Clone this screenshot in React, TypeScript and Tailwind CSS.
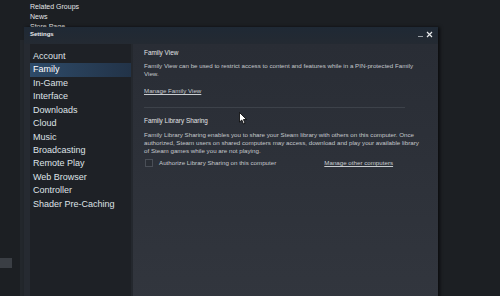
import React from "react";

const items = [
  "Account",
  "Family",
  "In-Game",
  "Interface",
  "Downloads",
  "Cloud",
  "Music",
  "Broadcasting",
  "Remote Play",
  "Web Browser",
  "Controller",
  "Shader Pre-Caching",
];

export default function App() {
  return (
    <div
      className="relative w-[500px] h-[296px] overflow-hidden bg-[#1c1f23] text-[#dfe3e6]"
      style={{ fontFamily: '"Liberation Sans", Arial, sans-serif' }}
    >
      {/* background page */}
      <div className="flex flex-col pl-[30px] pt-[2px] text-[7px] leading-[10px] text-[#e4e6e8]">
        <div>Related Groups</div>
        <div>News</div>
        <div>Store Page</div>
      </div>
      <div className="absolute left-0 top-[258px] w-[12px] h-[10px] bg-[#3a3e44]" />
      <div className="absolute left-[20px] top-[40px] w-[4px] h-[256px] bg-[#23272c]" />

      {/* settings window */}
      <div className="absolute left-[24px] top-[27px] w-[414px] h-[280px] flex flex-col bg-[#262a31] shadow-[2px_0_3px_rgba(0,0,0,0.6)]">
        <div className="h-[17px] flex items-center justify-between pl-[6px] pr-[5px] bg-gradient-to-b from-[#1f2935] to-[#242a32]">
          <span className="text-[6px] font-bold text-[#e8eaec] mt-[-3px]">Settings</span>
          <div className="flex items-center gap-[3px] mt-[-3px]">
            <div className="w-[5px] h-[1px] bg-[#9aa0a6] mt-[4px]" />
            <svg width="7" height="7" viewBox="0 0 7 7">
              <path d="M1 1L6 6M6 1L1 6" stroke="#e8eaec" strokeWidth="1.2" />
            </svg>
          </div>
        </div>
        <div className="flex flex-1 pl-[6px]">
          <div className="w-[101px] flex flex-col pt-[6px] bg-[#1e2126] text-[9px]">
            {items.map((it) => (
              <div
                key={it}
                className={
                  "h-[13.45px] flex items-center pl-[3px] " +
                  (it === "Family"
                    ? "bg-gradient-to-r from-[#2e4b69] to-[#223348] text-white"
                    : "text-[#dfe3e6]")
                }
              >
                {it}
              </div>
            ))}
          </div>
          <div className="w-[2px] bg-[#24282e]" />
          <div className="flex-1 flex flex-col pl-[11px] pr-[17px] pt-[20px] bg-gradient-to-b from-[#292d35] to-[#32363e] text-[6.2px] text-[#c4c8cc]">
            <div className="text-[6.4px] text-[#e2e4e6] leading-[8px] mt-[-15px]">Family View</div>
            <div className="mt-[5px] leading-[8px]">
              Family View can be used to restrict access to content and features while in a PIN-protected Family View.
            </div>
            <div className="mt-[9px] leading-[8px] underline text-[#c8ccd0]">Manage Family View</div>
            <div className="mt-[12px] h-[1px] bg-[#3d424a] mr-[16px]" />
            <div className="mt-[9px] text-[6.4px] text-[#e2e4e6] leading-[8px]">Family Library Sharing</div>
            <div className="mt-[6px] leading-[8px]">
              Family Library Sharing enables you to share your Steam library with others on this computer. Once authorized, Steam users on shared computers may access, download and play your available library of Steam games while you are not playing.
            </div>
            <div className="mt-[4px] flex items-center h-[8px]">
              <div className="ml-[1px] w-[8px] h-[8px] border border-[#4a4f57] bg-[#2a2e35]" />
              <span className="ml-[6px]">Authorize Library Sharing on this computer</span>
              <span className="ml-[48px] underline text-[#c8ccd0]">Manage other computers</span>
            </div>
          </div>
        </div>
      </div>

      {/* mouse cursor */}
      <svg className="absolute left-[239px] top-[112px]" width="9" height="13" viewBox="0 0 9 13">
        <path d="M0.5 0.5L0.5 10L2.8 8L4.5 12L6 11.3L4.4 7.5L7.5 7.5Z" fill="#ffffff" stroke="#000000" strokeWidth="0.8" />
      </svg>
    </div>
  );
}
